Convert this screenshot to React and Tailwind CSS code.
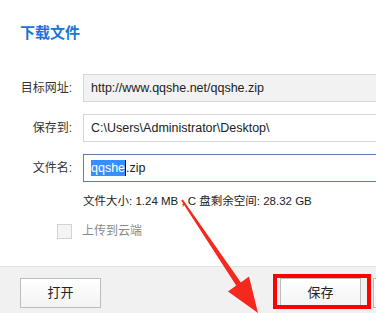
import React from "react";

const font = { fontFamily: '"Liberation Sans", "Noto Sans CJK SC", sans-serif' };

const Field = ({ label, children, className }) => (
    <div className="flex items-center h-[28px]">
        <div className="w-[72px] shrink-0 text-right text-[12px] text-[#333]">{label}</div>
        <div className={"ml-[11px] h-[28px] w-[320px] shrink-0 flex items-center pl-[7px] text-[12.5px] text-[#222] border " + className}>
            {children}
        </div>
    </div>
);

const Button = ({ children, className }) => (
    <button className={"h-[30px] w-[81px] shrink-0 border border-[#bcbcbc] bg-gradient-to-b from-white to-[#f3f3f3] text-[13px] text-[#222] " + (className || "")}>
        {children}
    </button>
);

const App = () => {
    return (
        <div style={font} className="relative w-[376px] h-[313px] overflow-hidden bg-white flex flex-col">
            <div className="pl-[20px] pt-[24px] h-[74px]">
                <h1 className="text-[15px] font-bold text-[#1a74d8] leading-[18px]">下载文件</h1>
            </div>

            <div className="flex flex-col gap-[12px]">
                <Field label="目标网址:" className="bg-[#f2f2f2] border-[#d6d6d6]">
                    http://www.qqshe.net/qqshe.zip
                </Field>
                <Field label="保存到:" className="bg-white border-[#d6d6d6]">
                    C:\Users\Administrator\Desktop\
                </Field>
                <Field label="文件名:" className="bg-white border-[#5b7ea8]">
                    <span className="bg-[#3390ff] text-white leading-[16px]">qqshe</span>
                    <span className="w-px h-[16px] bg-black"></span>
                    <span>.zip</span>
                </Field>
            </div>

            <div className="pl-[83px] mt-[12px] text-[11.5px] text-[#222] leading-[14px]">
                文件大小: 1.24 MB , C 盘剩余空间: 28.32 GB
            </div>

            <div className="flex items-center pl-[57px] mt-[14px]">
                <span className="w-[15px] h-[15px] border border-[#d3d3d3] bg-[#f4f4f4]"></span>
                <span className="ml-[10px] text-[12px] text-[#8a8a8a]">上传到云端</span>
            </div>

            <div className="mt-auto h-[47px] border-t border-[#e2e2e2] bg-[#f1f1f1] flex items-start pt-[11px] pl-[20px]">
                <Button>打开</Button>
                <Button className="ml-[179px]">保存</Button>
                <Button className="ml-[12px]"></Button>
            </div>

            {/* annotation: red box + arrow */}
            <div className="absolute left-[273px] top-[274px] w-[98px] h-[35px] border-4 border-[#ff0000] pointer-events-none"></div>
            <svg className="absolute left-0 top-0 pointer-events-none" width="376" height="313" viewBox="0 0 376 313">
                <polygon
                    fill="#f5281e"
                    points="181.2,200.6 236.2,285.6 228,291.5 258,313 249,276.5 240.9,282.5 182.8,199.4"
                />
            </svg>
        </div>
    );
};

export default App;
